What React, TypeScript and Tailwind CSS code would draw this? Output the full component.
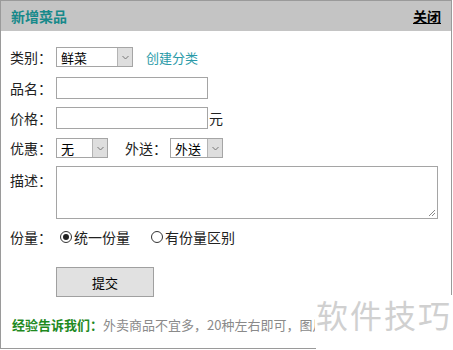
import React from 'react'

const font = { fontFamily: '"Noto Sans CJK SC", "Noto Sans", sans-serif' }

function Arrow() {
  return (
    <span className="flex h-full w-[15px] items-center justify-center border-l border-[#b4b4b4] bg-[#dedede]">
      <svg width="7" height="5" viewBox="0 0 7 5">
        <path d="M0.5 1 L3.5 4 L6.5 1" fill="none" stroke="#777" strokeWidth="1" />
      </svg>
    </span>
  )
}

function FakeSelect({ value, width }: { value: string; width: string }) {
  return (
    <div className={`flex h-[20px] items-center border border-[#a5a5a5] bg-white ${width}`}>
      <span className="flex-1 pl-[4px] text-[13px] leading-none text-black">{value}</span>
      <Arrow />
    </div>
  )
}

function Label({ children, className = '' }: { children: React.ReactNode; className?: string }) {
  return <span className={`w-[46px] shrink-0 text-[14px] leading-[18px] text-[#222] ${className}`}>{children}</span>
}

function Radio({ checked }: { checked?: boolean }) {
  return (
    <span className="mr-[2px] flex h-[12px] w-[12px] items-center justify-center rounded-full border border-[#333] bg-white">
      {checked && <span className="h-[6px] w-[6px] rounded-full bg-[#222]" />}
    </span>
  )
}

export default function App() {
  return (
    <div className="relative h-[350px] w-[453px] overflow-hidden bg-white" style={font}>
      <div className="h-[349px] w-[452px] border border-[#9a9a9a]">
        <div className="flex h-[30px] items-center justify-between bg-[#c4c4c4] px-[10px]">
          <span className="text-[14px] font-bold leading-none text-[#17898a]">新增菜品</span>
          <span className="text-[14px] font-bold leading-none text-black underline">关闭</span>
        </div>

        <div className="pl-[9px]">
          <div className="mt-[16px] flex h-[20px] items-center">
            <Label>类别：</Label>
            <FakeSelect value="鲜菜" width="w-[77px]" />
            <span className="ml-[13px] text-[13px] leading-none text-[#2a9aa8]">创建分类</span>
          </div>

          <div className="mt-[10px] flex h-[22px] items-center">
            <Label>品名：</Label>
            <div className="h-[22px] w-[152px] border border-[#a5a5a5] bg-white" />
          </div>

          <div className="mt-[8px] flex h-[22px] items-center">
            <Label>价格：</Label>
            <div className="h-[22px] w-[152px] border border-[#a5a5a5] bg-white" />
            <span className="ml-[1px] text-[14px] leading-none text-[#222]">元</span>
          </div>

          <div className="mt-[9px] flex h-[20px] items-center">
            <Label>优惠：</Label>
            <FakeSelect value="无" width="w-[52px]" />
            <span className="ml-[17px] w-[45px] text-[14px] leading-none text-[#222]">外送：</span>
            <FakeSelect value="外送" width="w-[53px]" />
          </div>

          <div className="mt-[8px] flex h-[53px] items-start">
            <Label className="pt-[5px]">描述：</Label>
            <div className="relative h-[53px] w-[382px] border border-[#a5a5a5] bg-white">
              <svg className="absolute bottom-[1px] right-[1px]" width="8" height="8" viewBox="0 0 8 8">
                <path d="M7 1 L1 7 M7 4 L4 7" stroke="#888" strokeWidth="1" />
              </svg>
            </div>
          </div>

          <div className="mt-[9px] flex h-[18px] items-center text-[14px] leading-none text-[#222]">
            <Label>份量：</Label>
            <span className="ml-[4px] flex items-center">
              <Radio checked />
              统一份量
            </span>
            <span className="ml-[21px] flex items-center">
              <Radio />
              有份量区别
            </span>
          </div>

          <button className="ml-[46px] mt-[21px] block h-[30px] w-[98px] border border-[#a0a0a0] bg-[#e1e1e1] text-[13px] leading-none text-black">
            提交
          </button>

          <div className="mt-[20px] w-[305px] overflow-hidden whitespace-nowrap pl-[2px] text-[13px] leading-[16px]">
            <span className="font-bold text-[#1f8a1f]">经验告诉我们：</span>
            <span className="text-[#8a8a8a]">外卖商品不宜多，20种左右即可，图片</span>
          </div>
        </div>
      </div>

      <div className="absolute left-[316px] top-[295px] flex h-[55px] w-[137px] items-start bg-white pt-[3px]">
        <span className="text-[32px] leading-none tracking-[2px] text-[#d0d0d0]">软件技巧</span>
      </div>
    </div>
  )
}
